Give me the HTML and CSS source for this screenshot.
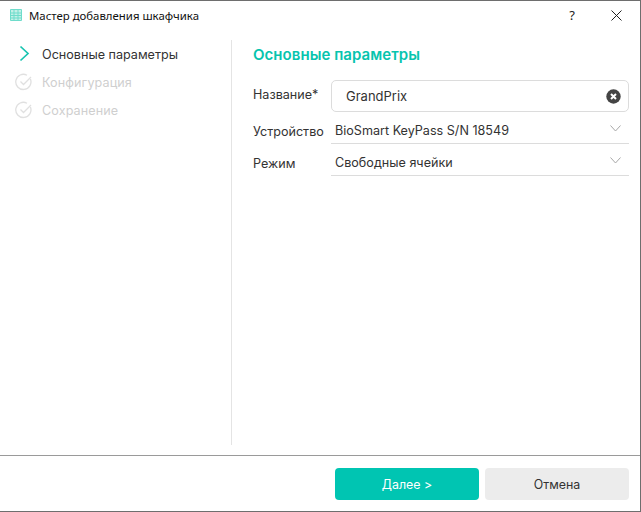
FILE: index.html
```html
<!DOCTYPE html>
<html lang="ru">
<head>
<meta charset="utf-8">
<title>Мастер добавления шкафчика</title>
<link rel="stylesheet" href="styles.css">
</head>
<body>
<div class="window">
  <header class="titlebar">
    <svg class="app-icon" width="12" height="12" viewBox="0 0 12 12"><path d="M.5.5h11v11H.5zM.5 4h11M.5 6.5h11M.5 9h11M4 .5v11M8 .5v11" fill="#c4f0e8" stroke="#6fdccb" stroke-width="1"/></svg>
    <span class="title">Мастер добавления шкафчика</span>
    <span class="help">?</span>
    <svg class="close" width="11" height="11" viewBox="0 0 11 11"><path d="M.5.5l10 10M10.5.5l-10 10" stroke="#222" stroke-width="1" fill="none"/></svg>
  </header>
  <main class="content">
    <nav class="steps">
      <div class="step active">
        <svg class="step-icon" width="18" height="18" viewBox="0 0 18 18"><path d="M5.5 1.5L13 8.5 5.5 15.5" fill="none" stroke="#18c4b0" stroke-width="1.7"/></svg>
        <span>Основные параметры</span>
      </div>
      <div class="step">
        <svg class="step-icon" width="18" height="18" viewBox="0 0 18 18"><path d="M15.4 6A7.6 7.6 0 1 1 12 2.2" fill="none" stroke="#e0e0e0" stroke-width="1.3"/><path d="M5.5 8.5l3 3L16 4" fill="none" stroke="#e0e0e0" stroke-width="1.3"/></svg>
        <span>Конфигурация</span>
      </div>
      <div class="step">
        <svg class="step-icon" width="18" height="18" viewBox="0 0 18 18"><path d="M15.4 6A7.6 7.6 0 1 1 12 2.2" fill="none" stroke="#e0e0e0" stroke-width="1.3"/><path d="M5.5 8.5l3 3L16 4" fill="none" stroke="#e0e0e0" stroke-width="1.3"/></svg>
        <span>Сохранение</span>
      </div>
    </nav>
    <section class="form">
      <h1 class="heading">Основные параметры</h1>
      <div class="row row-name">
        <label class="label">Название*</label>
        <div class="input">
          <span>GrandPrix</span>
          <svg class="clear" width="15" height="15" viewBox="0 0 15 15"><circle cx="7.5" cy="7.5" r="7.2" fill="#444"/><path d="M5 5l5 5M10 5l-5 5" stroke="#fff" stroke-width="2" fill="none"/></svg>
        </div>
      </div>
      <div class="row row-select">
        <label class="label">Устройство</label>
        <div class="select">
          <span>BioSmart KeyPass S/N 18549</span>
          <svg class="chevron" width="11" height="7" viewBox="0 0 11 7"><path d="M.5.5l5 5.5 5-5.5" fill="none" stroke="#a8a8a8" stroke-width="1"/></svg>
        </div>
      </div>
      <div class="row row-select">
        <label class="label">Режим</label>
        <div class="select">
          <span>Свободные ячейки</span>
          <svg class="chevron" width="11" height="7" viewBox="0 0 11 7"><path d="M.5.5l5 5.5 5-5.5" fill="none" stroke="#a8a8a8" stroke-width="1"/></svg>
        </div>
      </div>
    </section>
  </main>
  <footer class="footer">
    <button class="btn primary"><span class="mnemonic">Д</span>алее &gt;</button>
    <button class="btn secondary">Отмена</button>
  </footer>
</div>
</body>
</html>
```
FILE: styles.css
```css
* { box-sizing: border-box; }
html, body { margin: 0; padding: 0; background: #fff; }
body { width: 641px; height: 512px; overflow: hidden; font-family: "Inter", "Noto Sans", sans-serif; font-size: 12.6px; color: #333; }
.window { width: 641px; height: 512px; border-top: 1px solid #6e6e6e; border-right: 1px solid #6e6e6e; border-bottom: 1px solid #6e6e6e; display: flex; flex-direction: column; }
.titlebar { height: 30px; display: flex; align-items: center; padding: 0 0 2px 10px; flex: none; }
.app-icon { flex: none; margin-right: 7px; }
.title { font-family: "Noto Sans", sans-serif; font-size: 11.4px; color: #111; flex: 1; white-space: nowrap; }
.help { font-family: "Noto Sans", sans-serif; font-size: 13px; color: #222; margin-right: 36px; }
.close { margin-right: 18px; }
.content { flex: 1; display: flex; padding-top: 9px; }
.steps { width: 232px; height: 405px; border-right: 1px solid #e4e4e4; padding: 0 0 0 15px; flex: none; }
.step { display: flex; align-items: center; height: 28px; gap: 9px; color: #cfcfcf; white-space: nowrap; letter-spacing: .1px; }
.step.active { color: #333; letter-spacing: 0; }
.step-icon { flex: none; }
.form { flex: 1; padding: 6px 11px 0 21px; }
.heading { margin: 0 0 16px; font-size: 15px; line-height: 18px; font-weight: 600; color: #06c4ae; letter-spacing: .05px; }
.row { display: flex; align-items: center; }
.label { width: 78px; flex: none; white-space: nowrap; }
.row-name { height: 32px; margin-bottom: 4px; }
.row-name .label { margin-bottom: 4px; }
.row-select { height: 28px; padding-top: 2px; }
.row-select + .row-select { margin-top: 4px; }
.input { flex: 1; height: 32px; border: 1px solid #dcdcdc; border-radius: 5px; display: flex; align-items: center; justify-content: space-between; padding: 0 7px 0 14px; font-size: 13px; }
.select { flex: 1; height: 26px; border-bottom: 1px solid #dcdcdc; display: flex; align-items: center; justify-content: space-between; padding: 0 8px 0 4px; white-space: nowrap; }
.chevron { margin-top: -4px; }
.footer { height: 56px; flex: none; border-top: 1px solid #9a9a9a; display: flex; justify-content: flex-end; gap: 6px; padding: 12px 11px 0 0; }
.btn { width: 144px; height: 32px; border: 0; border-radius: 4px; font-family: inherit; font-size: 12.4px; }
.primary { background: #00c5b2; color: #fff; }
.secondary { background: #ececec; color: #333; }
.mnemonic { text-decoration: underline; }
```
